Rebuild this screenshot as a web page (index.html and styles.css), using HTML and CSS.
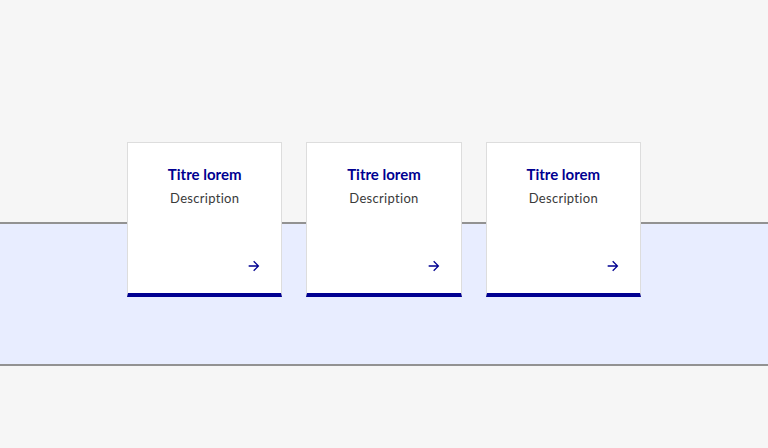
FILE: index.html
```html
<!DOCTYPE html>
<html lang="fr">
<head>
<meta charset="utf-8">
<title>Tuiles</title>
<link rel="stylesheet" href="styles.css">
</head>
<body>
<div class="top-space"></div>
<section class="band">
  <div class="tiles">
    <a class="tile" href="#">
      <h3 class="tile-title">Titre lorem</h3>
      <p class="tile-desc">Description</p>
      <svg class="tile-icon" viewBox="0 0 24 24" width="16" height="16"><path d="M16.172 11l-5.364-5.364 1.414-1.414L20 12l-7.778 7.778-1.414-1.414L16.172 13H4v-2z" fill="#000091"/></svg>
    </a>
    <a class="tile" href="#">
      <h3 class="tile-title">Titre lorem</h3>
      <p class="tile-desc">Description</p>
      <svg class="tile-icon" viewBox="0 0 24 24" width="16" height="16"><path d="M16.172 11l-5.364-5.364 1.414-1.414L20 12l-7.778 7.778-1.414-1.414L16.172 13H4v-2z" fill="#000091"/></svg>
    </a>
    <a class="tile" href="#">
      <h3 class="tile-title">Titre lorem</h3>
      <p class="tile-desc">Description</p>
      <svg class="tile-icon" viewBox="0 0 24 24" width="16" height="16"><path d="M16.172 11l-5.364-5.364 1.414-1.414L20 12l-7.778 7.778-1.414-1.414L16.172 13H4v-2z" fill="#000091"/></svg>
    </a>
  </div>
</section>
</body>
</html>
```
FILE: styles.css
```css
html, body {
  margin: 0;
  padding: 0;
  background: #f6f6f6;
  font-family: "Lato", "Noto Sans", sans-serif;
}
.top-space {
  height: 222px;
}
.band {
  height: 140px;
  background: #e8edff;
  border-top: 2px solid #929292;
  border-bottom: 2px solid #929292;
}
.tiles {
  display: flex;
  justify-content: center;
  gap: 24px;
  margin-top: -82px;
}
.tile {
  box-sizing: border-box;
  width: 155.33px;
  height: 155px;
  background: #fff;
  border: 1px solid #dddddd;
  border-bottom: 4px solid #000091;
  padding: 19px 19px 19px;
  display: flex;
  flex-direction: column;
  text-decoration: none;
}
.tile-title {
  margin: 0;
  text-align: center;
  color: #000091;
  font-size: 15px;
  font-weight: 700;
  line-height: 24px;
}
.tile-desc {
  margin: 2px 0 0;
  text-align: center;
  color: #3a3a3a;
  font-size: 13px;
  letter-spacing: 0.3px;
  line-height: 20px;
}
.tile-icon {
  margin-top: auto;
  align-self: flex-end;
  display: block;
}
```
